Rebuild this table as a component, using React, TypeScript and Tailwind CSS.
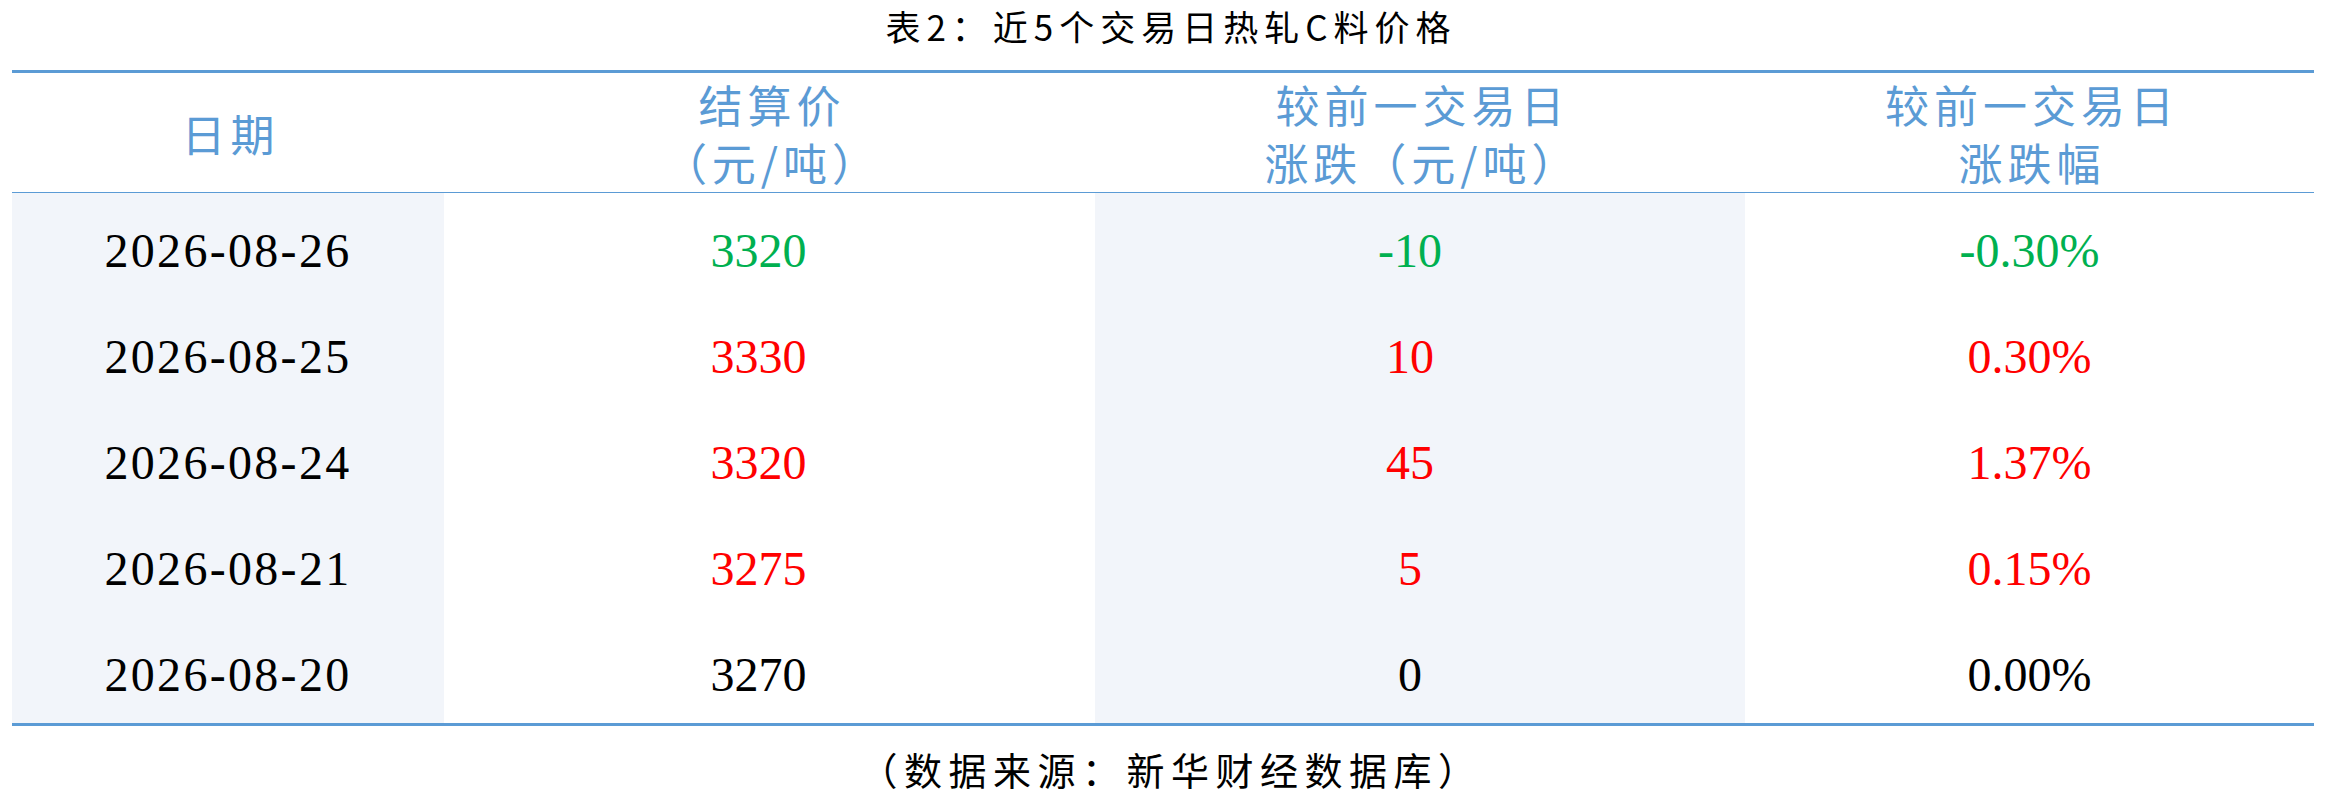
const rows = [
  { date: "2026-08-26", price: "3320", diff: "-10", pct: "-0.30%", tone: "text-[#00b050]" },
  { date: "2026-08-25", price: "3330", diff: "10", pct: "0.30%", tone: "text-[#ff0000]" },
  { date: "2026-08-24", price: "3320", diff: "45", pct: "1.37%", tone: "text-[#ff0000]" },
  { date: "2026-08-21", price: "3275", diff: "5", pct: "0.15%", tone: "text-[#ff0000]" },
  { date: "2026-08-20", price: "3270", diff: "0", pct: "0.00%", tone: "text-black" },
];

const cjk = "font-['Noto_Sans_CJK_SC',sans-serif]";
const num = "font-['Liberation_Serif','Noto_Sans_CJK_SC',serif] text-[48px]";

export default function App() {
  return (
    <div className={`w-[2342px] h-[796px] bg-white ${cjk}`}>
      <div className="h-[70px] flex justify-center pt-[4px]">
        <h1 className="text-[35px] leading-[44px] tracking-[6px] text-black font-normal">
          表2：近5个交易日热轧C料价格
        </h1>
      </div>

      <div className="mx-[12px] w-[2302px] border-t-[3px] border-b-[3px] border-[#5b9bd5]">
        <div className="grid grid-cols-[432px_651px_650px_569px] h-[120px] border-b border-[#5b9bd5] text-[#5b9bd5] text-[44px] leading-[58px] tracking-[5px] text-center">
          <div className="flex items-center justify-center pl-[5px]">日期</div>
          <div className="flex flex-col items-center justify-center pl-[5px]">
            <span>结算价</span>
            <span>（元/吨）</span>
          </div>
          <div className="flex flex-col items-center justify-center pl-[5px]">
            <span>较前一交易日</span>
            <span>涨跌（元/吨）</span>
          </div>
          <div className="flex flex-col items-center justify-center pl-[5px]">
            <span>较前一交易日</span>
            <span>涨跌幅</span>
          </div>
        </div>

        {rows.map((r) => (
          <div key={r.date} className={`grid grid-cols-[432px_651px_650px_569px] h-[106px] ${num}`}>
            <div className="bg-[#f2f5fa] flex items-center justify-center pt-[10px] tracking-[2.3px] text-black">{r.date}</div>
            <div className={`flex items-center justify-center pt-[10px] pr-[22px] ${r.tone}`}>{r.price}</div>
            <div className={`bg-[#f2f5fa] flex items-center justify-center pt-[10px] pr-[20px] ${r.tone}`}>{r.diff}</div>
            <div className={`flex items-center justify-center pt-[10px] ${r.tone}`}>{r.pct}</div>
          </div>
        ))}
      </div>

      <div className="flex justify-center pt-[20px]">
        <p className="text-[38px] leading-[46px] tracking-[6.5px] text-black">（数据来源：新华财经数据库）</p>
      </div>
    </div>
  );
}
